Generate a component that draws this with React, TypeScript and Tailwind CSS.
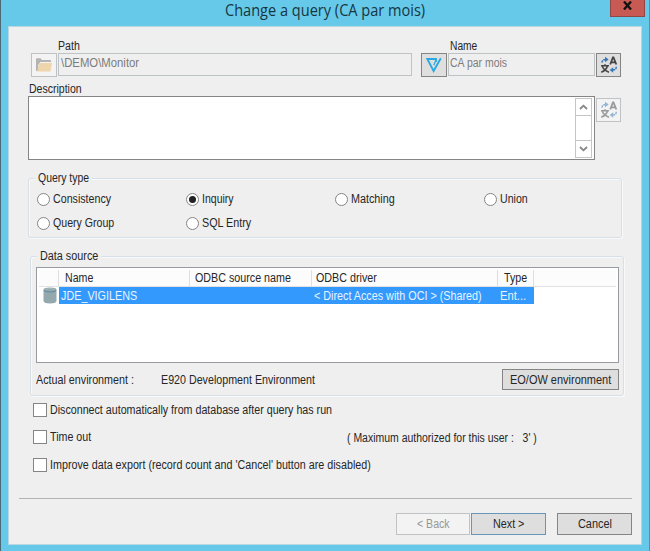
import { useLayoutEffect, useRef, useState } from 'react';
import type { ReactNode } from 'react';

/* A single line of text, condensed or stretched to a given width. */
function T({ w, children, className = '' }: { w: number; children: string; className?: string }) {
  const ref = useRef<HTMLSpanElement>(null);
  const [scale, setScale] = useState(1);
  useLayoutEffect(() => {
    if (ref.current) setScale(w / ref.current.offsetWidth);
  }, [w, children]);
  return (
    <span className={`block shrink-0 whitespace-pre ${className}`} style={{ width: w }}>
      <span ref={ref} className="inline-block origin-left" style={{ transform: `scaleX(${scale})` }}>
        {children}
      </span>
    </span>
  );
}

function FolderIcon() {
  return (
    <svg width="18" height="16" viewBox="0 0 18 16">
      <path d="M1 14V2.2Q1 1.2 2 1.2H5.5L7 3H15.3Q16 3 16 4V5H5.2L3.2 8V14Z" fill="#b4b4b2" />
      <path d="M4.5 6H17L15.5 14.5H2Z" fill="#efd5ab" />
    </svg>
  );
}

function LogoIcon() {
  return (
    <svg width="18" height="18" viewBox="0 0 18 18" fill="none" stroke="#27a9e0" strokeWidth="1.8">
      <path d="M11 6V3H2.3L8.6 15L15.8 2.2" />
      <path d="M11.2 3.2L8.8 9.2" strokeWidth="1.2" />
    </svg>
  );
}

function TranslateIcon({ faded = false }: { faded?: boolean }) {
  return (
    <svg width="18" height="18" viewBox="0 0 18 18" fill="none" className={faded ? 'opacity-50' : ''}>
      <g stroke="#454545" strokeWidth="1.8">
        <path d="M10.2 8.5L12.9 1.5H13.5L16.3 8.5M11 6.3H15.4" />
        <path d="M1 9.8H9M5 8.2V10M7.4 10Q6.5 14 1.3 16.2M2.4 10.5Q4 14.4 9 16.2" strokeWidth="1.6" />
      </g>
      <g stroke="#3878b8" strokeWidth="1.5">
        <path d="M2 6.6Q2.3 3.5 5.5 3.5" strokeDasharray="2.2 .7" />
        <path d="M16.3 10.8Q16.2 14 12.8 14" strokeDasharray="2.2 .7" />
      </g>
      <path d="M5 .8L8.7 3.5L5 6.2ZM13.2 11.2L9.7 14L13.2 16.8Z" fill="#3878b8" />
    </svg>
  );
}

function DatabaseIcon() {
  return (
    <svg width="14" height="17" viewBox="0 0 14 17">
      <path d="M.5 2.7Q.5 .6 7 .6T13.5 2.7V14Q13 16.5 7 16.5T.5 14Z" fill="#93a9ad" />
      <path d="M1 3.3Q2 5 7 5T13 3.3" fill="none" stroke="#6289a5" strokeWidth="1.1" />
      <path d="M2 2.3Q7 .8 12 2.3" fill="none" stroke="#a9babb" />
    </svg>
  );
}

function Chevron({ down = false }: { down?: boolean }) {
  return (
    <svg width="9" height="6" viewBox="0 0 9 6" fill="none" stroke="#858585" strokeWidth="1.8">
      <path d={down ? 'M1 1L4.5 4.3L8 1' : 'M1 5L4.5 1.7L8 5'} />
    </svg>
  );
}

function Radio({ label, w, checked = false }: { label: string; w: number; checked?: boolean }) {
  return (
    <div className="flex h-6 w-[149px] shrink-0 items-center">
      <span className="mr-[3px] flex size-[13px] items-center justify-center rounded-full border border-[#858585] bg-white">
        {checked && <span className="size-[7px] rounded-full bg-[#222]" />}
      </span>
      <T w={w}>{label}</T>
    </div>
  );
}

function Check({ label, w }: { label: string; w: number }) {
  return (
    <div className="flex h-[14px] items-center">
      <span className="mr-[3px] size-[14px] border border-[#858585] bg-white" />
      <T w={w}>{label}</T>
    </div>
  );
}

function Group({ title, w, className, children }: { title: string; w: number; className: string; children: ReactNode }) {
  return (
    <div className={`relative w-[594px] rounded-[3px] border border-[#d7e0e6] shadow-[inset_1px_1px_0_#f8f9fa,1px_1px_0_#f8f9fa] ${className}`}>
      <div className="absolute -top-2 left-[6px] bg-[#efefef] px-[3px]">
        <T w={w}>{title}</T>
      </div>
      {children}
    </div>
  );
}

export default function App() {
  return (
    <div className="flex h-[551px] w-[650px] flex-col overflow-hidden border-l border-l-[#4b6874] border-r border-r-[#4598ba] bg-[#66c9e9] font-['Liberation_Sans',Arial,sans-serif] text-[12.5px] leading-[14px] text-[#262626]">
      <header className="flex h-[26px] shrink-0 items-start">
        <T w={200} className="ml-[224px] font-['Open_Sans',sans-serif] text-[15.5px] leading-[21px] text-[#173642]">
          Change a query (CA par mois)
        </T>
        <div className="ml-[185px] flex h-[17px] w-[35px] items-center justify-center border border-t-0 border-[#8d4745] bg-[#c75a53]">
          <svg width="9" height="9" viewBox="0 0 9 9" stroke="#111" strokeWidth="2.3" className="mb-[5px]">
            <path d="M1 .5L8 8.5M8 .5L1 8.5" />
          </svg>
        </div>
      </header>

      <main className="ml-[7px] flex h-[519px] w-[634px] shrink-0 flex-col border border-[#b9d7e1] bg-[#efefef]">
        <div className="mt-[12px] flex h-[14px] shrink-0">
          <T w={22} className="ml-[49px]">Path</T>
          <T w={27} className="ml-[370px]">Name</T>
        </div>
        <div className="ml-[22px] flex h-6 shrink-0">
          <div className="flex w-[26px] items-center justify-center border border-[#bfc3c5] bg-[#f3f3f3]"><FolderIcon /></div>
          <div className="ml-px h-[23px] w-[354px] border border-[#bec3c6] pl-[2px] pt-[2px] text-[#7c7c7c]">
            <T w={78}>\DEMO\Monitor</T>
          </div>
          <div className="ml-[9px] flex w-[26px] items-center justify-center border border-[#858585] bg-[#dfdfdf]"><LogoIcon /></div>
          <div className="ml-px h-[23px] w-[147px] border border-[#bec3c6] pl-px pt-[2px] text-[#7c7c7c]">
            <T w={57}>CA par mois</T>
          </div>
          <div className="ml-px flex w-[25px] items-center justify-center border border-[#858585] bg-[#dfdfdf]"><TranslateIcon /></div>
        </div>
        <T w={53} className="ml-[20px] mt-[5px] h-[14px]">Description</T>
        <div className="ml-[19px] flex h-[64px] shrink-0">
          <div className="flex w-[567px] justify-end border border-[#858585] bg-white p-[2px]">
            <div className="-mt-px flex h-[60px] w-[17px] flex-col border border-[#c5c5c5]">
              <div className="flex h-[17px] shrink-0 items-center justify-center border-b border-[#c5c5c5]"><Chevron /></div>
              <div className="flex-1" />
              <div className="flex h-[17px] shrink-0 items-center justify-center border-t border-[#c5c5c5]"><Chevron down /></div>
            </div>
          </div>
          <div className="ml-px mt-[2px] flex h-6 w-[25px] items-center justify-center border border-[#bfc3c5] bg-[#f3f3f3]"><TranslateIcon faded /></div>
        </div>

        <Group title="Query type" w={51} className="ml-[19px] mt-[18px] h-[60px] shrink-0">
          <div className="ml-[8px] mt-[8px] flex h-6">
            <Radio label="Consistency" w={58} />
            <Radio label="Inquiry" w={32} checked />
            <Radio label="Matching" w={44} />
            <Radio label="Union" w={28} />
          </div>
          <div className="ml-[8px] flex h-6">
            <Radio label="Query Group" w={61} />
            <Radio label="SQL Entry" w={49} />
          </div>
        </Group>

        <Group title="Data source" w={58} className="ml-[21px] mt-[18px] h-[140px] shrink-0">
          <div className="ml-[5px] mt-[10px] h-[96px] w-[583px] border border-[#989ba2] bg-white p-[2px]">
            <div className="flex h-[17px] items-center border-b border-[#e2e2e2] bg-[#fcfcfc]">
              <div className="h-full w-[20px] border-r border-[#dedede]" />
              <div className="h-full w-[131px] border-r border-[#dedede] pl-[6px] pt-px"><T w={28}>Name</T></div>
              <div className="h-full w-[122px] border-r border-[#dedede] pl-[5px] pt-px"><T w={96}>ODBC source name</T></div>
              <div className="h-full w-[186px] border-r border-[#dedede] pl-[4px] pt-px"><T w={61}>ODBC driver</T></div>
              <div className="h-full w-[36px] border-r border-[#dedede] pl-[6px] pt-px"><T w={23}>Type</T></div>
            </div>
            <div className="flex h-[17px]">
              <div className="w-[20px] pl-[4px]"><DatabaseIcon /></div>
              <div className="flex w-[475px] items-center bg-[#3399fd] text-[#e8f4ff]">
                <T w={76} className="ml-[2px]">JDE_VIGILENS</T>
                <T w={168} className="ml-[177px]">{'< Direct Acces with OCI > (Shared)'}</T>
                <T w={26} className="ml-[18px]">Ent...</T>
              </div>
            </div>
          </div>
          <div className="ml-[5px] mt-[6px] flex h-[21px] w-[583px] items-center">
            <T w={98}>Actual environment :</T>
            <T w={154} className="ml-[27px]">E920 Development Environment</T>
            <div className="ml-auto flex h-[21px] w-[117px] items-center justify-center border border-[#858585] bg-[#dedede]">
              <T w={101}>EO/OW environment</T>
            </div>
          </div>
        </Group>

        <div className="ml-[24px] mt-[7px] flex shrink-0 flex-col">
          <Check label="Disconnect automatically from database after query has run" w={282} />
          <div className="mt-[13px] flex h-[14px]">
            <Check label="Time out" w={41} />
            <T w={190} className="ml-[256px] mt-px">{"( Maximum authorized for this user :   3' )"}</T>
          </div>
          <div className="mt-[14px]">
            <Check label="Improve data export (record count and 'Cancel' button are disabled)" w={321} />
          </div>
        </div>

        <div className="ml-[10px] mt-[26px] h-px w-[613px] shrink-0 bg-[#b3b3b3]" />
        <div className="ml-[387px] mt-[14px] flex h-[22px] shrink-0">
          <div className="flex w-[74px] items-center justify-center border border-[#c0c3c4] bg-[#f3f3f3] text-[#969696]"><T w={33}>{'< Back'}</T></div>
          <div className="ml-px flex w-[75px] items-center justify-center border border-[#6797b8] bg-[#dedede]"><T w={31}>{'Next >'}</T></div>
          <div className="ml-[11px] flex w-[75px] items-center justify-center border border-[#858585] bg-[#dedede]"><T w={34}>Cancel</T></div>
        </div>
      </main>
    </div>
  );
}
